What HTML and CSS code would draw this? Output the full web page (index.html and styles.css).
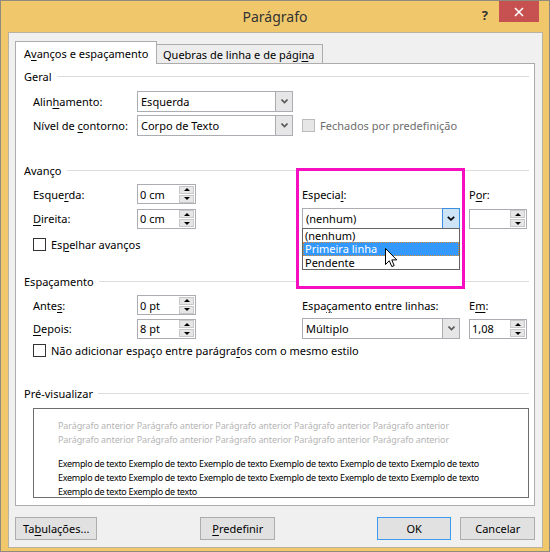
FILE: index.html
```html
<!DOCTYPE html>
<html lang="pt">
<head>
    <meta charset="UTF-8">
    <meta name="viewport" content="width=device-width, initial-scale=1.0">
    <title>Parágrafo</title>
    <link rel="stylesheet" href="styles.css">
</head>
<body>
    <div class="window">
        <div class="titlebar">
            <div></div>
            <div class="title">Parágrafo</div>
            <div class="controls">
                <span class="help">?</span>
                <span class="close">
                    <svg width="10" height="10" viewBox="0 0 10 10"><path d="M1 1L9 9M9 1L1 9" stroke="#fff" stroke-width="1.6"/></svg>
                </span>
            </div>
        </div>

        <div class="client">
            <div class="tabs">
                <div class="tab active">A<u>v</u>anços e espaçamento</div>
                <div class="tab">Quebras de linha e de pági<u>n</u>a</div>
            </div>

            <div class="panel">
                <!-- highlight drawn round the "Especial" field -->
                <div class="highlight"></div>

                <div class="group-head">Geral</div>
                <div class="grid geral">
                    <label>Alin<u>h</u>amento:</label>
                    <div class="select">
                        <span class="text">Esquerda</span>
                        <span class="drop"><svg width="7" height="5" viewBox="0 0 7 5"><path d="M0.5 0.5L3.5 3.5L6.5 0.5" fill="none" stroke="#5a5a5a" stroke-width="1.6"/></svg></span>
                    </div>
                    <span></span>
                    <label>Nível de <u>c</u>ontorno:</label>
                    <div class="select">
                        <span class="text">Corpo de Texto</span>
                        <span class="drop"><svg width="7" height="5" viewBox="0 0 7 5"><path d="M0.5 0.5L3.5 3.5L6.5 0.5" fill="none" stroke="#5a5a5a" stroke-width="1.6"/></svg></span>
                    </div>
                    <div class="check disabled"><span class="box"></span><span>Fechados por predefinição</span></div>
                </div>

                <div class="group-head avanco">Avanço</div>
                <div class="grid indent">
                    <label class="col-label">Esque<u>r</u>da:</label>
                    <div class="spin"><span>0 cm</span><span class="arrows"><i class="up"></i><i class="down"></i></span></div>
                    <label class="col-right">Especia<u>l</u>:</label>
                    <label class="col-by">P<u>o</u>r:</label>

                    <label class="col-label"><u>D</u>ireita:</label>
                    <div class="spin"><span>0 cm</span><span class="arrows"><i class="up"></i><i class="down"></i></span></div>
                    <div class="select open col-right">
                        <span class="text">(nenhum)</span>
                        <span class="drop"><svg width="8" height="5" viewBox="0 0 8 5"><path d="M0.8 0.8L4 3.8L7.2 0.8" fill="none" stroke="#000" stroke-width="1.8"/></svg></span>
                        <ul class="list">
                            <li>(nenhum)</li>
                            <li class="selected">Primeira linha</li>
                            <li>Pendente</li>
                            <svg class="pointer" width="13" height="20" viewBox="0 0 13 20"><path d="M0.5 0.5V16.5L4.3 12.8L6.8 18.6L9.2 17.6L6.8 11.9H11.8Z" fill="#fff" stroke="#000" stroke-width="1" stroke-linejoin="round"/></svg>
                        </ul>
                    </div>
                    <div class="spin col-by"><span></span><span class="arrows"><i class="up"></i><i class="down"></i></span></div>

                    <div class="check row-check"><span class="box"></span><span>Es<u>p</u>elhar avanços</span></div>
                </div>

                <div class="group-head espacamento">Espaçamento</div>
                <div class="grid spacing">
                    <label class="col-label">Ante<u>s</u>:</label>
                    <div class="spin"><span>0 pt</span><span class="arrows"><i class="up"></i><i class="down"></i></span></div>
                    <label class="col-right">Espa<u>ç</u>amento entre linhas:</label>
                    <label class="col-by">E<u>m</u>:</label>

                    <label class="col-label"><u>D</u>epois:</label>
                    <div class="spin"><span>8 pt</span><span class="arrows"><i class="up"></i><i class="down"></i></span></div>
                    <div class="select col-right">
                        <span class="text">Múltiplo</span>
                        <span class="drop"><svg width="7" height="5" viewBox="0 0 7 5"><path d="M0.5 0.5L3.5 3.5L6.5 0.5" fill="none" stroke="#5a5a5a" stroke-width="1.6"/></svg></span>
                    </div>
                    <div class="spin col-by"><span>1,08</span><span class="arrows"><i class="up"></i><i class="down"></i></span></div>

                    <div class="check row-check"><span class="box"></span><span>Não adicionar espaço entre parágra<u>f</u>os com o mesmo estilo</span></div>
                </div>

                <div class="group-head preview-head">Pré-visualizar</div>
                <div class="preview">
                    <div class="previous">
                        <div>Parágrafo anterior Parágrafo anterior Parágrafo anterior Parágrafo anterior Parágrafo anterior</div>
                        <div>Parágrafo anterior Parágrafo anterior Parágrafo anterior Parágrafo anterior Parágrafo anterior</div>
                    </div>
                    <div class="sample">
                        <div>Exemplo de texto Exemplo de texto Exemplo de texto Exemplo de texto Exemplo de texto Exemplo de texto</div>
                        <div>Exemplo de texto Exemplo de texto Exemplo de texto Exemplo de texto Exemplo de texto Exemplo de texto</div>
                        <div>Exemplo de texto Exemplo de texto</div>
                    </div>
                </div>
            </div>

            <div class="buttons">
                <button class="btn tabs-btn">Ta<u>b</u>ulações...</button>
                <button class="btn reset-btn"><u>P</u>redefinir</button>
                <button class="btn ok-btn">OK</button>
                <button class="btn cancel-btn">Cancelar</button>
            </div>
        </div>
    </div>
</body>
</html>
```

FILE: styles.css
```css
* {
    box-sizing: border-box;
}

html, body {
    margin: 0;
}

body {
    width: 550px;
    height: 552px;
    font-family: "Noto Sans", "Open Sans", sans-serif;
    font-size: 11px;
    color: #000;
}

u {
    text-decoration-thickness: 1px;
    text-underline-offset: 2px;
}

label {
    white-space: nowrap;
}

/* window frame */
.window {
    width: 550px;
    height: 552px;
    background: #f0c86b;
    border: 1px solid #8f8a7c;
}

.titlebar {
    height: 31px;
    display: grid;
    grid-template-columns: 1fr auto 1fr;
    align-items: start;
}

.title {
    font-size: 14px;
    line-height: 32px;
    color: #333;
}

.controls {
    display: flex;
    justify-content: flex-end;
    align-items: flex-start;
}

.help {
    font-weight: bold;
    font-size: 13px;
    color: #333;
    margin-top: 5px;
    margin-right: 11px;
}

.close {
    width: 40px;
    height: 21px;
    margin-right: 10px;
    background: #c75050;
    display: flex;
    align-items: center;
    justify-content: center;
}

.client {
    height: 516px;
    margin: 0 6px 0 7px;
    padding: 8px 7px 0 6px;
    background: #f0f0f0;
    border: 1px solid #b9b2a0;
}

/* tabs */
.tabs {
    display: flex;
    align-items: flex-end;
    height: 23px;
    margin-bottom: -1px;
}

.tab {
    position: relative;
    height: 19px;
    width: 167px;
    margin-left: -1px;
    margin-bottom: 1px;
    padding-left: 6px;
    display: flex;
    align-items: center;
    background: #ededed;
    border: 1px solid #acacac;
    border-bottom: none;
    white-space: nowrap;
}

.tab.active {
    z-index: 1;
    height: 23px;
    width: 142px;
    margin-left: 0;
    margin-bottom: 0;
    padding: 1px 0 0 8px;
    background: #fff;
}

.panel {
    position: relative;
    height: 443px;
    padding: 5px 5px 0 8px;
    background: #fff;
    border: 1px solid #acacac;
}

.highlight {
    position: absolute;
    left: 280px;
    top: 104px;
    width: 169px;
    height: 121px;
    border: 3px solid #f50fc0;
    background: #fff;
}

/* group headings with a rule after the text */
.group-head {
    display: flex;
    align-items: center;
    height: 16px;
    line-height: 16px;
}

.group-head::after {
    content: "";
    flex: 1;
    height: 1px;
    margin: -1px 0 0 5px;
    background: #dcdcdc;
}

.avanco {
    margin-top: 27px;
}

.espacamento {
    margin-top: 22px;
}

.preview-head {
    margin-top: 28px;
}

.grid {
    display: grid;
    margin-left: 9px;
    align-items: center;
}

.geral {
    margin-top: 6px;
    grid-template-columns: 104px 156px auto;
    grid-auto-rows: 21px;
    row-gap: 3px;
}

.indent,
.spacing {
    margin-top: 5px;
    grid-template-columns: 104px 59px 106px 158px 9px 58px;
}

.indent {
    grid-template-rows: 20px 21px 19px;
    row-gap: 4px;
}

.spacing {
    grid-template-rows: 20px 21px 16px;
    row-gap: 3px;
}

.col-label {
    grid-column: 1;
}

.col-right {
    grid-column: 4;
    position: relative;
    z-index: 1;
}

.col-by {
    grid-column: 6;
}

.row-check {
    grid-column: 1 / -1;
    align-self: end;
}

/* checkboxes */
.check {
    display: flex;
    align-items: center;
    gap: 5px;
    white-space: nowrap;
}

.geral .check {
    margin-left: 9px;
}

.box {
    width: 13px;
    height: 13px;
    background: #fff;
    border: 1px solid #333;
}

.check.disabled {
    color: #6d6d6d;
}

.check.disabled .box {
    background: #e6e6e6;
    border-color: #bcbcbc;
}

/* combo boxes */
.select {
    display: flex;
    height: 21px;
    background: #fff;
    border: 1px solid #abadb3;
}

.select .text {
    flex: 1;
    padding-left: 3px;
    display: flex;
    align-items: center;
    white-space: nowrap;
}

.drop {
    width: 17px;
    display: flex;
    align-items: center;
    justify-content: center;
    background: #e6e6e6;
    border-left: 1px solid #acacac;
}

.select.open {
    z-index: 2;
}

.select.open .drop {
    background: #cde4f7;
    border: 1px solid #3c8fe0;
    margin: -1px -1px -1px 0;
    width: 18px;
}

.list {
    position: absolute;
    left: -1px;
    top: 19px;
    width: 158px;
    margin: 0;
    padding: 0;
    list-style: none;
    background: #fff;
    border: 1px solid #646464;
}

.list li {
    height: 13px;
    line-height: 13px;
    padding-left: 2px;
    white-space: nowrap;
}

.list li.selected {
    height: 14px;
    line-height: 14px;
    color: #fff;
    background: #3399ff;
    outline: 1px dotted #d98a3a;
    outline-offset: -1px;
}

.pointer {
    position: absolute;
    left: 82px;
    top: 19px;
}

/* spin boxes */
.spin {
    height: 20px;
    display: flex;
    align-items: center;
    justify-content: space-between;
    padding: 0 1px 0 2px;
    background: #fff;
    border: 1px solid #abadb3;
}

.arrows {
    display: flex;
    flex-direction: column;
    gap: 1px;
}

.arrows i {
    width: 15px;
    height: 8px;
    display: flex;
    align-items: center;
    justify-content: center;
    background: #e6e6e6;
    border: 1px solid #c8c8c8;
}

.arrows i::before {
    content: "";
    border-left: 3px solid transparent;
    border-right: 3px solid transparent;
}

.arrows .up::before {
    border-bottom: 3px solid #000;
}

.arrows .down::before {
    border-top: 3px solid #000;
}

/* preview box */
.preview {
    height: 90px;
    margin: 6px 0 0 9px;
    padding: 10px 0 0 24px;
    overflow: hidden;
    background: #fff;
    border: 1px solid #6e6e6e;
    font-size: 9px;
    line-height: 14px;
    letter-spacing: -0.3px;
    white-space: nowrap;
}

.previous {
    color: #b4b4b4;
    margin-bottom: 10px;
    letter-spacing: -0.1px;
}

/* dialog buttons */
.buttons {
    display: flex;
    margin-top: 11px;
}

.btn {
    height: 23px;
    width: 75px;
    padding: 0;
    font: inherit;
    color: #000;
    background: #e1e1e1;
    border: 1px solid #adadad;
}

.tabs-btn {
    width: 83px;
}

.reset-btn {
    margin-left: 103px;
}

.ok-btn {
    margin-left: 102px;
    border-color: #3c9aef;
}

.cancel-btn {
    margin-left: 9px;
}
```
